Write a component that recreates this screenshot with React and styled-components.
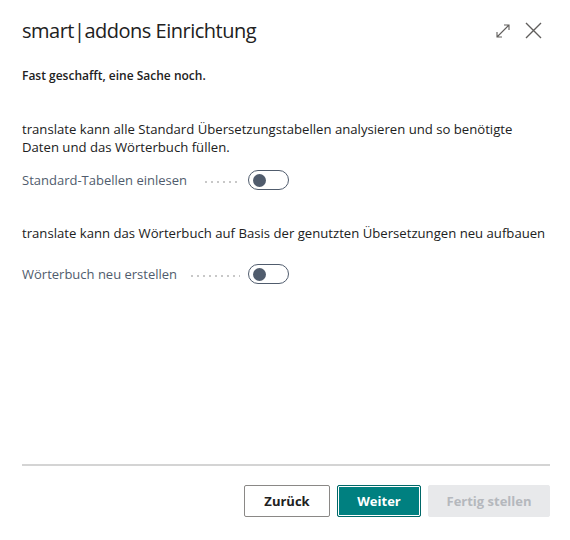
import React from "react";
import styled, { createGlobalStyle } from "styled-components";

const Global = createGlobalStyle`
  html, body { margin: 0; padding: 0; background: #fff; }
  body { font-family: "Open Sans", "Noto Sans", sans-serif; color: #212121; }
  * { box-sizing: border-box; }
`;

const Dialog = styled.div`
  width: 570px;
  height: 540px;
  display: flex;
  flex-direction: column;
  padding: 0 20px 0 22px;
`;

const Header = styled.div`
  display: flex;
  align-items: center;
  justify-content: space-between;
  height: 61px;
`;

const Title = styled.h1`
  margin: 0;
  font-size: 20px;
  font-weight: 400;
  color: #212121;
  letter-spacing: -0.5px;
`;

const HeaderIcons = styled.div`
  display: flex;
  align-items: center;
  gap: 14px;
  margin-right: 8px;
`;

const IconBtn = styled.span`
  display: inline-flex;
  color: #605e5c;
`;

const Body = styled.div`
  flex: 1;
  display: flex;
  flex-direction: column;
`;

const Lead = styled.p`
  margin: 6px 0 0;
  font-size: 12px;
  font-weight: 600;
  color: #212121;
`;

const Para = styled.p`
  margin: ${(p) => p.$mt}px 0 0;
  font-size: 13.15px;
  line-height: 18px;
  color: #212121;
`;

const FieldRow = styled.div`
  display: grid;
  grid-template-columns: auto 1fr 41px;
  align-items: center;
  width: 267px;
  margin-top: ${(p) => p.$mt}px;
  height: 22px;
`;

const Label = styled.span`
  font-size: 13px;
  color: #505c6d;
  white-space: nowrap;
`;

const Leader = styled.span`
  height: 2px;
  margin: 3px 8px 0 ${(p) => p.$ml}px;
  background-image: radial-gradient(circle, #c8c8c8 0.8px, transparent 1px);
  background-size: 6px 2px;
  background-repeat: repeat-x;
`;

const Toggle = styled.span`
  width: 41px;
  height: 20px;
  border: 1px solid #505c6d;
  border-radius: 10px;
  display: flex;
  align-items: center;
  padding-left: 4px;
`;

const Knob = styled.span`
  width: 13px;
  height: 13px;
  border-radius: 50%;
  background: #505c6d;
`;

const Divider = styled.hr`
  margin: 0;
  border: 0;
  border-top: 2px solid #d4d4d4;
`;

const Footer = styled.div`
  display: flex;
  justify-content: flex-end;
  gap: 7px;
  padding: 19px 0 23px;
`;

const Button = styled.button`
  height: 32px;
  padding: 0;
  width: ${(p) => p.$w}px;
  font-family: inherit;
  font-size: 13px;
  font-weight: 700;
  border-radius: 2px;
  cursor: pointer;
  ${(p) =>
    p.$variant === "primary"
      ? `background: #008080; color: #fff; border: 1px solid #006868; box-shadow: inset 0 0 0 1px #fff;`
      : p.$variant === "disabled"
      ? `background: #e8e9eb; color: #b5b8bd; border: 1px solid #e8e9eb;`
      : `background: #fff; color: #212121; border: 1px solid #8a8886;`}
`;

const ExpandIcon = () => (
  <svg width="16" height="16" viewBox="0 0 16 16" fill="none" stroke="currentColor" strokeWidth="1.1">
    <path d="M2 14 L14 2 M9 2 H14 V7 M2 9 V14 H7" />
  </svg>
);

const CloseIcon = () => (
  <svg width="17" height="17" viewBox="0 0 17 17" fill="none" stroke="currentColor" strokeWidth="1.4">
    <path d="M1 1 L16 16 M16 1 L1 16" />
  </svg>
);

export default function App() {
  return (
    <>
      <Global />
      <Dialog>
        <Header>
          <Title>smart|addons Einrichtung</Title>
          <HeaderIcons>
            <IconBtn><ExpandIcon /></IconBtn>
            <IconBtn><CloseIcon /></IconBtn>
          </HeaderIcons>
        </Header>
        <Body>
          <Lead>Fast geschafft, eine Sache noch.</Lead>
          <Para $mt={36}>
            translate kann alle Standard Übersetzungstabellen analysieren und so benötigte Daten und das Wörterbuch füllen.
          </Para>
          <FieldRow $mt={13}>
            <Label>Standard-Tabellen einlesen</Label>
            <Leader $ml={16} />
            <Toggle><Knob /></Toggle>
          </FieldRow>
          <Para $mt={33}>
            translate kann das Wörterbuch auf Basis der genutzten Übersetzungen neu aufbauen
          </Para>
          <FieldRow $mt={21}>
            <Label>Wörterbuch neu erstellen</Label>
            <Leader $ml={12} />
            <Toggle><Knob /></Toggle>
          </FieldRow>
        </Body>
        <Divider />
        <Footer>
          <Button $w={86}>Zurück</Button>
          <Button $w={84} $variant="primary">Weiter</Button>
          <Button $w={122} $variant="disabled">Fertig stellen</Button>
        </Footer>
      </Dialog>
    </>
  );
}
